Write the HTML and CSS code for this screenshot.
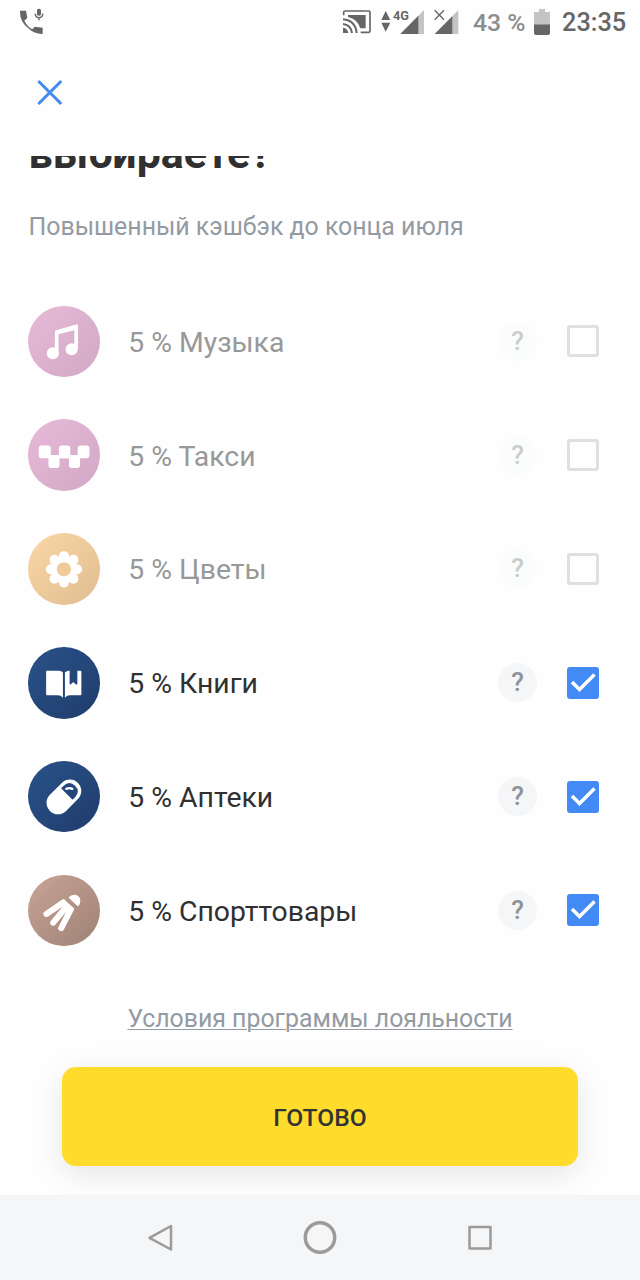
FILE: index.html
```
<!DOCTYPE html>
<html lang="ru">
<head>
<meta charset="utf-8">
<title>Кэшбэк</title>
<link rel="stylesheet" href="styles.css">
</head>
<body>
<header class="status">
  <svg class="call" width="30" height="30" viewBox="0 0 90 90" fill="#666"><path d="M6 11h18l4 22-9 8q10 19 24 26l7-8 24 3v19q-24 1-43-17Q6 45 6 16z"/><rect x="57" y="5" width="12" height="21" rx="5"/><path d="M51 20q2 12 12 12t12-12M63 32v8" fill="none" stroke="#666" stroke-width="4"/></svg>
  <svg class="signals" width="134" height="44" viewBox="0 0 402 132">
    <g fill="none" stroke="#666" stroke-width="5"><path d="M11 46V37q0-4 4-4h71q4 0 4 4v56q0 4-4 4H62"/><path d="M9 72q23 2 27 27M9 58q37 3 41 41" stroke-width="6"/></g>
    <path d="M24 45h53v40H61Q52 57 24 51zM9 83q14 2 16 16H9z" fill="#666"/>
    <path d="M124 60l13-27 14 27zM124 68l13 27 14-27z" fill="#666"/>
    <path d="M252 30v72h-71z" fill="#c4c4c4"/><path d="M235 47v55h-54zM338 47v55h-54z" fill="#666"/>
    <path d="M355 30v72h-17V47z" fill="#c4c4c4"/><path d="M284 31l28 28M312 31l-28 28" stroke="#666" stroke-width="4"/>
    <text class="net" x="159" y="59" textLength="48" lengthAdjust="spacingAndGlyphs">4G</text>
  </svg>
  <span class="percent">43 %</span>
  <svg class="battery" width="16" height="28" viewBox="0 0 16 28"><path d="M5 1h6v3h5v13H0V4h5z" fill="#c4c4c4"/><path d="M0 16.500h16V25q0 2-2 2H2q-2 0-2-2z" fill="#666"/></svg>
  <span class="time">23:35</span>
</header>
<nav class="toolbar"><svg width="26" height="26" viewBox="0 0 26 26"><path d="M2.300 2l21 21m0-21l-21 21" stroke="#438af1" stroke-width="3.100" stroke-linecap="round"/></svg></nav>
<main class="content">
  <h1 class="title">выбираете?</h1>
  <p class="subtitle">Повышенный кэшбэк до конца июля</p>
  <ul class="list">
    <li class="row off"><svg class="icon pink" viewBox="0 0 213 213"><circle cx="74" cy="141" r="18"/><circle cx="130" cy="129" r="18"/><path d="M80 142V77q0-4 4-5l60-17q5-1 5 4v70h-11V70l-47 13v59z"/><path d="M85 73l58-16v14L85 86z"/></svg><span class="name">5 % Музыка</span><span class="help">?</span><span class="box"></span></li>
    <li class="row off"><svg class="icon pink" viewBox="0 0 213 213"><rect x="32" y="79" width="36" height="38" rx="9"/><rect x="92" y="79" width="34" height="38" rx="9"/><rect x="148" y="79" width="35" height="38" rx="9"/><rect x="61" y="108" width="33" height="38" rx="8"/><rect x="122" y="108" width="33" height="38" rx="8"/><path d="M59 107h98v10H59z"/></svg><span class="name">5 % Такси</span><span class="help">?</span><span class="box"></span></li>
    <li class="row off"><svg class="icon orange" viewBox="0 0 213 213"><circle cx="107" cy="69" r="15"/><circle cx="107" cy="147" r="15"/><circle cx="68" cy="108" r="15"/><circle cx="146" cy="108" r="15"/><circle cx="79" cy="80" r="15"/><circle cx="135" cy="80" r="15"/><circle cx="79" cy="136" r="15"/><circle cx="135" cy="136" r="15"/><circle cx="107" cy="108" r="40"/><circle cx="107" cy="108" r="21" fill="#efca9b"/></svg><span class="name">5 % Цветы</span><span class="help">?</span><span class="box"></span></li>
    <li class="row"><svg class="icon blue" viewBox="0 0 213 213"><path d="M57 71h36q7 0 11 5v75q-6-7-15-7H57q-3 0-3-3V74q0-3 3-3zM110 76q4-5 14-6v37q0 6 4 4l7-7 7 7q5 3 5-3V71h9q3 0 3 3v67q0 3-3 3h-31q-9 0-15 7z"/></svg><span class="name">5 % Книги</span><span class="help">?</span><span class="box on"><svg viewBox="0 0 32 32"><path d="M5 15l7.500 7.500L27.500 7.500"/></svg></span></li>
    <li class="row"><svg class="icon blue" viewBox="0 0 213 213"><g transform="rotate(45 107 107)"><rect x="73" y="48" width="68" height="118" rx="34"/><path d="M83 95V84q0-24 24-24t24 24v11z" fill="#24477b"/></g><path d="M114 83q9-4 18 0" fill="none" stroke="#fff" stroke-width="7" stroke-linecap="round"/></svg><span class="name">5 % Аптеки</span><span class="help">?</span><span class="box on"><svg viewBox="0 0 32 32"><path d="M5 15l7.500 7.500L27.500 7.500"/></svg></span></li>
    <li class="row"><svg class="icon brown" viewBox="0 0 213 213"><path d="M121 68q7-10 20-9 14 3 15 18 0 11-7 17z"/><g stroke="#fff" stroke-linecap="round" stroke-linejoin="round"><path d="M55 116l50-34M75 142l41-49M99 158l28-55" stroke-width="18"/><path d="M106 80l25 22" stroke-width="12"/></g></svg><span class="name">5 % Спорттовары</span><span class="help">?</span><span class="box on"><svg viewBox="0 0 32 32"><path d="M5 15l7.500 7.500L27.500 7.500"/></svg></span></li>
  </ul>
  <a class="terms">Условия программы лояльности</a>
  <button class="done">ГОТОВО</button>
</main>
<footer class="nav">
  <svg width="36" height="36" viewBox="0 0 36 36"><path d="M29 6v23.500L7.500 17.800z"/></svg>
  <svg width="36" height="36" viewBox="0 0 36 36"><circle cx="18" cy="17.500" r="14.700" stroke-width="3.500"/></svg>
  <svg width="36" height="36" viewBox="0 0 36 36"><path d="M7.500 7h21v21.500h-21z"/></svg>
</footer>
</body>
</html>
```
FILE: styles.css
```
* { box-sizing: border-box; }
body { margin: 0; width: 640px; height: 1280px; display: flex; flex-direction: column; background: #fefefe; font-family: Roboto, sans-serif; color: #303030; overflow: hidden; }
.status { height: 44px; display: flex; align-items: center; padding-left: 18px; color: #666; white-space: nowrap; }
.call { margin-right: 292px; flex: none; }
.signals { flex: none; margin-right: -1px; }
.net { font: 700 38px Roboto, sans-serif; fill: #666; }
.percent { width: 61px; font-size: 24.800px; font-weight: 500; color: #8d8d8d; }
.battery { flex: none; }
.time { font-size: 25.300px; font-weight: 500; margin-left: 12px; }
.toolbar { height: 112px; padding: 36px 0 0 37px; }
.content { height: 1039px; overflow: hidden; display: flex; flex-direction: column; }
.title { margin: -27px 0 0 28.500px; height: 50px; font-size: 42.900px; line-height: 48px; font-weight: 700; flex: none; }
.subtitle { margin: 33px 0 0 28.500px; height: 30px; line-height: 30px; font-size: 24.880px; color: #949aa2; }
.list { list-style: none; margin: 42.500px 0 0; padding: 0; }
.row { height: 113.800px; display: flex; align-items: center; padding: 0 41px 0 28px; }
.icon { width: 71.500px; height: 71.500px; border-radius: 50%; fill: #fff; flex: none; }
.pink { background: linear-gradient(135deg, #e8bad8, #d0a8c5); }
.orange { background: linear-gradient(135deg, #fbd7a6, #e0bd91); }
.blue { background: linear-gradient(135deg, #29528a, #203c6b); }
.brown { background: linear-gradient(135deg, #c7a597, #9f8175); }
.name { flex: 1; margin-left: 28.800px; padding-top: 2px; font-size: 28.350px; white-space: nowrap; }
.help { width: 39px; height: 39px; border-radius: 50%; background: #f5f6f8; color: #8e9299; font-size: 26px; font-weight: 500; line-height: 39px; text-align: center; margin-right: 30px; }
.box { width: 32px; height: 32px; border-radius: 3px; border: 3px solid #e0e0e0; }
.box.on { border: 0; background: #438af4; }
.box svg { display: block; fill: none; stroke: #fff; stroke-width: 3.500; }
.off .name { color: #989898; }
.off .help { background: #fbfcfc; color: #cbcccd; }
.terms { align-self: center; margin-top: 36px; height: 32px; line-height: 32px; font-size: 24.850px; color: #949aa2; text-decoration: underline; text-decoration-thickness: 1px; text-underline-offset: 2px; white-space: nowrap; }
.done { margin: 32px 62px 0; padding: 2px 0 0; height: 99px; flex: none; border: 0; border-radius: 14px; background: #ffdc2c; color: #333; font: 500 24.600px Roboto, sans-serif; box-shadow: 0 8px 32px rgba(0,0,0,.1); }
.nav { height: 85px; background: #f5f6f8; display: flex; justify-content: center; align-items: center; gap: 124px; }
.nav svg { fill: none; stroke: #9b9b9b; stroke-width: 2.500; stroke-linejoin: round; }
```
